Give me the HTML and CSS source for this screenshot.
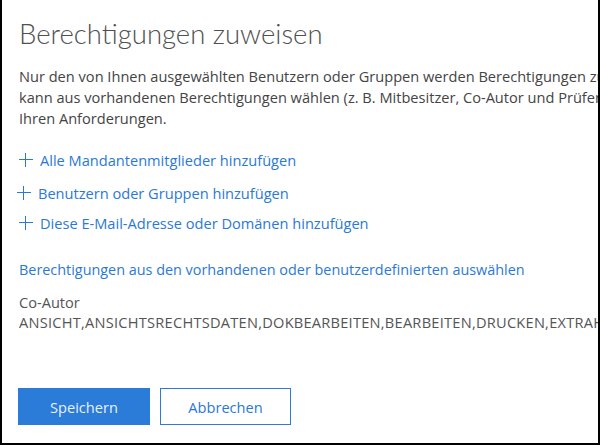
FILE: index.html
```html
<!DOCTYPE html>
<html lang="de">
<head>
<meta charset="utf-8">
<link rel="stylesheet" href="styles.css">
</head>
<body>
<div class="dialog">
  <h1 class="title">Berechtigungen zuweisen</h1>
  <p class="intro">Nur den von Ihnen ausgewählten Benutzern oder Gruppen werden Berechtigungen zugewiesen. Sie kann aus vorhandenen Berechtigungen wählen (z. B. Mitbesitzer, Co-Autor und Prüfer) entsprechend Ihren Anforderungen.</p>
  <div class="links">
    <a class="add add-1"><span class="plus"></span>Alle Mandantenmitglieder hinzufügen</a>
    <a class="add add-2"><span class="plus"></span>Benutzern oder Gruppen hinzufügen</a>
    <a class="add add-3"><span class="plus"></span>Diese E-Mail-Adresse oder Domänen hinzufügen</a>
  </div>
  <a class="choose">Berechtigungen aus den vorhandenen oder benutzerdefinierten auswählen</a>
  <div class="role">
    <div class="role-name">Co-Autor</div>
    <div class="role-rights">ANSICHT,ANSICHTSRECHTSDATEN,DOKBEARBEITEN,BEARBEITEN,DRUCKEN,EXTRAHIEREN,ANTWORTEN,ALLEANTWORTEN,WEITERLEITEN,OBJMODELL</div>
  </div>
  <div class="actions">
    <button class="btn btn-primary">Speichern</button>
    <button class="btn btn-secondary">Abbrechen</button>
  </div>
</div>
</body>
</html>
```

FILE: styles.css
```css
html, body {
  margin: 0;
  padding: 0;
  background: #fff;
}
.dialog {
  box-sizing: border-box;
  width: 600px;
  height: 445px;
  border-left: 2px solid #000;
  border-right: 2px solid #000;
  border-bottom: 2px solid #000;
  padding: 0 0 0 17px;
  overflow: hidden;
  font-family: "Open Sans", "Noto Sans", sans-serif;
  color: #444;
  display: flex;
  flex-direction: column;
}
.title {
  margin: 14px 0 0 0;
  font-family: "Lato", sans-serif;
  font-weight: 300;
  font-size: 27.5px;
  line-height: 40px;
  color: #505050;
  white-space: nowrap;
}
.intro {
  width: 700px;
  margin: 12px 0 0 0;
  font-size: 14.6px;
  line-height: 21px;
  color: #444;
}
.links {
  display: flex;
  flex-direction: column;
  margin-top: 21px;
}
.add {
  display: flex;
  align-items: center;
  color: #2b79d6;
  font-size: 14.6px;
  line-height: 20px;
  white-space: nowrap;
}
.add-2 { margin-top: 13px; margin-left: -2px; }
.add-3 { margin-top: 10px; }
.plus {
  position: relative;
  width: 14px;
  height: 14px;
  margin-right: 7px;
  flex: none;
}
.plus::before, .plus::after {
  content: "";
  position: absolute;
  background: #2b79d6;
}
.plus::before { left: 0; top: 6px; width: 14px; height: 1px; }
.plus::after { left: 6px; top: 0; width: 1px; height: 14px; }
.choose {
  margin-top: 27px;
  color: #2b79d6;
  font-size: 14.4px;
  line-height: 20px;
  white-space: nowrap;
}
.role {
  margin-top: 12px;
  font-size: 14.6px;
  line-height: 20px;
  color: #555;
  white-space: nowrap;
}
.role-rights {
  letter-spacing: 0.25px;
}
.actions {
  display: flex;
  gap: 10px;
  margin-top: 56px;
  margin-left: -1px;
}
.btn {
  box-sizing: border-box;
  width: 132px;
  height: 37px;
  font-family: "Open Sans", "Noto Sans", sans-serif;
  font-size: 14.6px;
  border: 1px solid #2b7bd8;
  padding: 0;
}
.btn-primary {
  background: #2b7bd8;
  color: #e8f0fb;
}
.btn-secondary {
  width: 131px;
  background: #fff;
  color: #2b79d6;
}
```
